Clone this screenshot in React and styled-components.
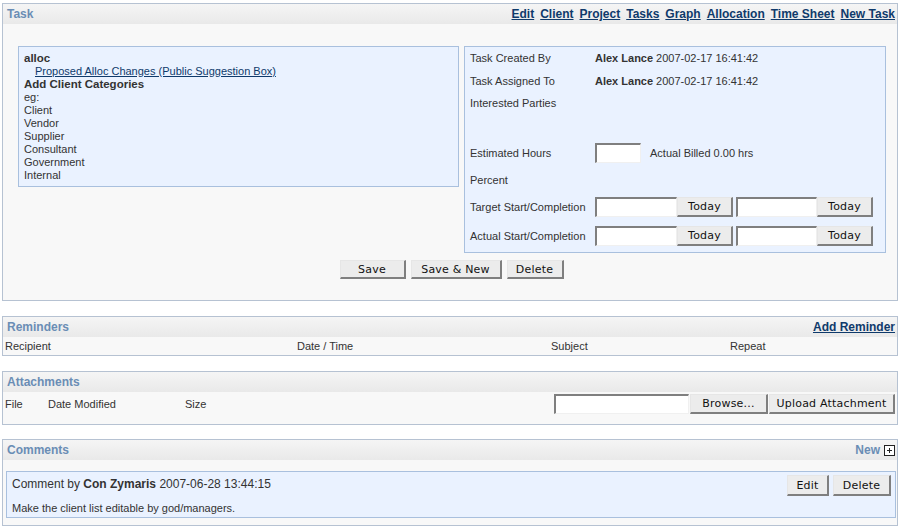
import React from "react";
import styled, { createGlobalStyle } from "styled-components";

const Global = createGlobalStyle`
  html, body { margin: 0; padding: 0; background: #fff; }
  body {
    font-family: "Liberation Sans", Arial, sans-serif;
    font-size: 11px;
    color: #333;
  }
  #root { padding: 3px 5px 0 2px; }
`;

const Page = styled.div`
  display: flex;
  flex-direction: column;
`;

const Box = styled.section`
  border: 1px solid #b6c2d2;
  background: #f8f8f8;
  margin-top: ${(p) => p.$mt || 0}px;
`;

const Header = styled.div`
  height: 20px;
  display: flex;
  align-items: center;
  justify-content: space-between;
  padding: 0 2px 0 4px;
  background: linear-gradient(#f5f5f5, #e9e9e9);
`;

const Title = styled.h2`
  margin: 0;
  font-size: 12px;
  font-weight: bold;
  color: #6a8db5;
`;

const Nav = styled.nav`
  display: flex;
  gap: 6px;
`;

const NavLink = styled.a`
  font-size: 12px;
  font-weight: bold;
  color: #0f3a6b;
  text-decoration: underline;
  cursor: pointer;
`;

const TaskBody = styled.div`
  padding: 22px 12px 21px 15px;
  display: flex;
  flex-direction: column;
  gap: 7px;
`;

const Columns = styled.div`
  display: grid;
  grid-template-columns: 441px 422px;
  gap: 5px;
  align-items: start;
`;

const Panel = styled.div`
  background: #eaf2ff;
  border: 1px solid #a9c0de;
`;

const LeftPanel = styled(Panel)`
  padding: 5px 5px 4px 5px;
  line-height: 13px;
`;

const Strong = styled.div`
  font-weight: bold;
  font-size: 11.5px;
`;

const Indented = styled.div`
  padding-left: 11px;
`;

const TextLink = styled.a`
  color: #0f3a6b;
  text-decoration: underline;
`;

const RightPanel = styled(Panel)`
  padding: 0 5px 0 5px;
`;

const Row = styled.div`
  display: grid;
  grid-template-columns: 125px 1fr;
  height: ${(p) => p.$h}px;
  align-items: ${(p) => (p.$top ? "start" : "center")};
  line-height: ${(p) => (p.$top ? "23px" : "normal")};
`;

const Value = styled.div`
  display: flex;
  align-items: center;
`;

const Bold = styled.b`
  font-weight: bold;
  margin-right: 3px;
`;

const Input = styled.input`
  box-sizing: border-box;
  width: ${(p) => p.$w}px;
  height: 20px;
  margin: 0;
  padding: 0 2px;
  background: #fff;
  border-style: solid;
  border-width: 2px 1px 1px 2px;
  border-color: #7f7f7f #f0f0f0 #f0f0f0 #7f7f7f;
  outline: none;
`;

const Button = styled.button`
  box-sizing: border-box;
  width: ${(p) => p.$w}px;
  height: ${(p) => p.$h || 19}px;
  margin: 0;
  padding: 0;
  background: #ececec;
  border-style: solid;
  border-width: 1px 2px 2px 1px;
  border-color: #e6e6e6 #7f7f7f #7f7f7f #e6e6e6;
  font-family: "DejaVu Sans", Verdana, sans-serif;
  font-size: 11px;
  color: #111;
  letter-spacing: 0.2px;
  cursor: pointer;
`;

const Billed = styled.span`
  margin-left: 9px;
`;

const DatePair = styled.div`
  display: flex;
  align-items: center;
  gap: 3px;
`;

const DateGroup = styled.div`
  display: flex;
  align-items: center;
`;

const ButtonRow = styled.div`
  display: flex;
  justify-content: center;
  gap: ${(p) => p.$gap || 4}px;
`;

const ColumnsRow = styled.div`
  display: grid;
  grid-template-columns: ${(p) => p.$cols};
  align-items: center;
  height: ${(p) => p.$h}px;
  padding: 0 2px ${(p) => p.$pb || 0}px 2px;
`;

const Upload = styled.div`
  display: flex;
  align-items: center;
  justify-content: flex-end;
  gap: 1px;
`;

const NewLink = styled.span`
  display: flex;
  align-items: center;
  gap: 4px;
  font-size: 12px;
  font-weight: bold;
  color: #6a8db5;
`;

const PlusBox = styled.svg`
  display: block;
`;

const CommentsBody = styled.div`
  padding: 11px 1px 7px 3px;
`;

const Comment = styled.div`
  background: #eaf2ff;
  border: 1px solid #a9c0de;
  padding: 3px 4px 3px 5px;
`;

const CommentHead = styled.div`
  display: flex;
  justify-content: space-between;
  align-items: flex-start;
`;

const CommentMeta = styled.div`
  font-size: 12px;
  padding-top: 2px;
  b { font-weight: bold; }
`;

const CommentText = styled.div`
  margin-top: 6px;
  font-size: 11px;
`;

export default function App() {
  return (
    <>
      <Global />
      <Page>
        <Box>
          <Header>
            <Title>Task</Title>
            <Nav>
              {["Edit", "Client", "Project", "Tasks", "Graph", "Allocation", "Time Sheet", "New Task"].map((l) => (
                <NavLink key={l}>{l}</NavLink>
              ))}
            </Nav>
          </Header>
          <TaskBody>
            <Columns>
              <LeftPanel>
                <Strong>alloc</Strong>
                <Indented>
                  <TextLink>Proposed Alloc Changes (Public Suggestion Box)</TextLink>
                </Indented>
                <Strong>Add Client Categories</Strong>
                <div>eg:</div>
                <div>Client</div>
                <div>Vendor</div>
                <div>Supplier</div>
                <div>Consultant</div>
                <div>Government</div>
                <div>Internal</div>
              </LeftPanel>
              <RightPanel>
                <Row $h={22}>
                  <span>Task Created By</span>
                  <Value><Bold>Alex Lance</Bold>2007-02-17 16:41:42</Value>
                </Row>
                <Row $h={23}>
                  <span>Task Assigned To</span>
                  <Value><Bold>Alex Lance</Bold>2007-02-17 16:41:42</Value>
                </Row>
                <Row $h={47} $top>
                  <span>Interested Parties</span>
                  <span />
                </Row>
                <Row $h={27}>
                  <span>Estimated Hours</span>
                  <Value>
                    <Input $w={46} />
                    <Billed>Actual Billed 0.00 hrs</Billed>
                  </Value>
                </Row>
                <Row $h={27}>
                  <span>Percent</span>
                  <span />
                </Row>
                <Row $h={27}>
                  <span>Target Start/Completion</span>
                  <DatePair>
                    <DateGroup><Input $w={82} /><Button $w={56} $h={20}>Today</Button></DateGroup>
                    <DateGroup><Input $w={81} /><Button $w={56} $h={20}>Today</Button></DateGroup>
                  </DatePair>
                </Row>
                <Row $h={32}>
                  <span>Actual Start/Completion</span>
                  <DatePair>
                    <DateGroup><Input $w={82} /><Button $w={56} $h={20}>Today</Button></DateGroup>
                    <DateGroup><Input $w={81} /><Button $w={56} $h={20}>Today</Button></DateGroup>
                  </DatePair>
                </Row>
              </RightPanel>
            </Columns>
            <ButtonRow $gap={5}>
              <Button $w={66}>Save</Button>
              <Button $w={91}>Save &amp; New</Button>
              <Button $w={57}>Delete</Button>
            </ButtonRow>
          </TaskBody>
        </Box>

        <Box $mt={15}>
          <Header>
            <Title>Reminders</Title>
            <NavLink>Add Reminder</NavLink>
          </Header>
          <ColumnsRow $cols="292px 254px 179px 1fr" $h={18}>
            <span>Recipient</span>
            <span>Date / Time</span>
            <span>Subject</span>
            <span>Repeat</span>
          </ColumnsRow>
        </Box>

        <Box $mt={15}>
          <Header>
            <Title>Attachments</Title>
          </Header>
          <ColumnsRow $cols="43px 137px 1fr auto" $h={24} $pb={8}>
            <span>File</span>
            <span>Date Modified</span>
            <span>Size</span>
            <Upload>
              <Input $w={135} />
              <Button $w={78} $h={20}>Browse...</Button>
              <Button $w={126} $h={20}>Upload Attachment</Button>
            </Upload>
          </ColumnsRow>
        </Box>

        <Box $mt={14}>
          <Header>
            <Title>Comments</Title>
            <NewLink>
              New
              <PlusBox width="11" height="11" viewBox="0 0 11 11">
                <rect x="0.5" y="0.5" width="10" height="10" fill="#fff" stroke="#222" />
                <path d="M3 5.5h5M5.5 3v5" stroke="#222" strokeWidth="1" />
              </PlusBox>
            </NewLink>
          </Header>
          <CommentsBody>
            <Comment>
              <CommentHead>
                <CommentMeta>
                  Comment by <b>Con Zymaris</b> 2007-06-28 13:44:15
                </CommentMeta>
                <ButtonRow $gap={4}>
                  <Button $w={42} $h={21}>Edit</Button>
                  <Button $w={58} $h={21}>Delete</Button>
                </ButtonRow>
              </CommentHead>
              <CommentText>Make the client list editable by god/managers.</CommentText>
            </Comment>
          </CommentsBody>
        </Box>
      </Page>
    </>
  );
}
